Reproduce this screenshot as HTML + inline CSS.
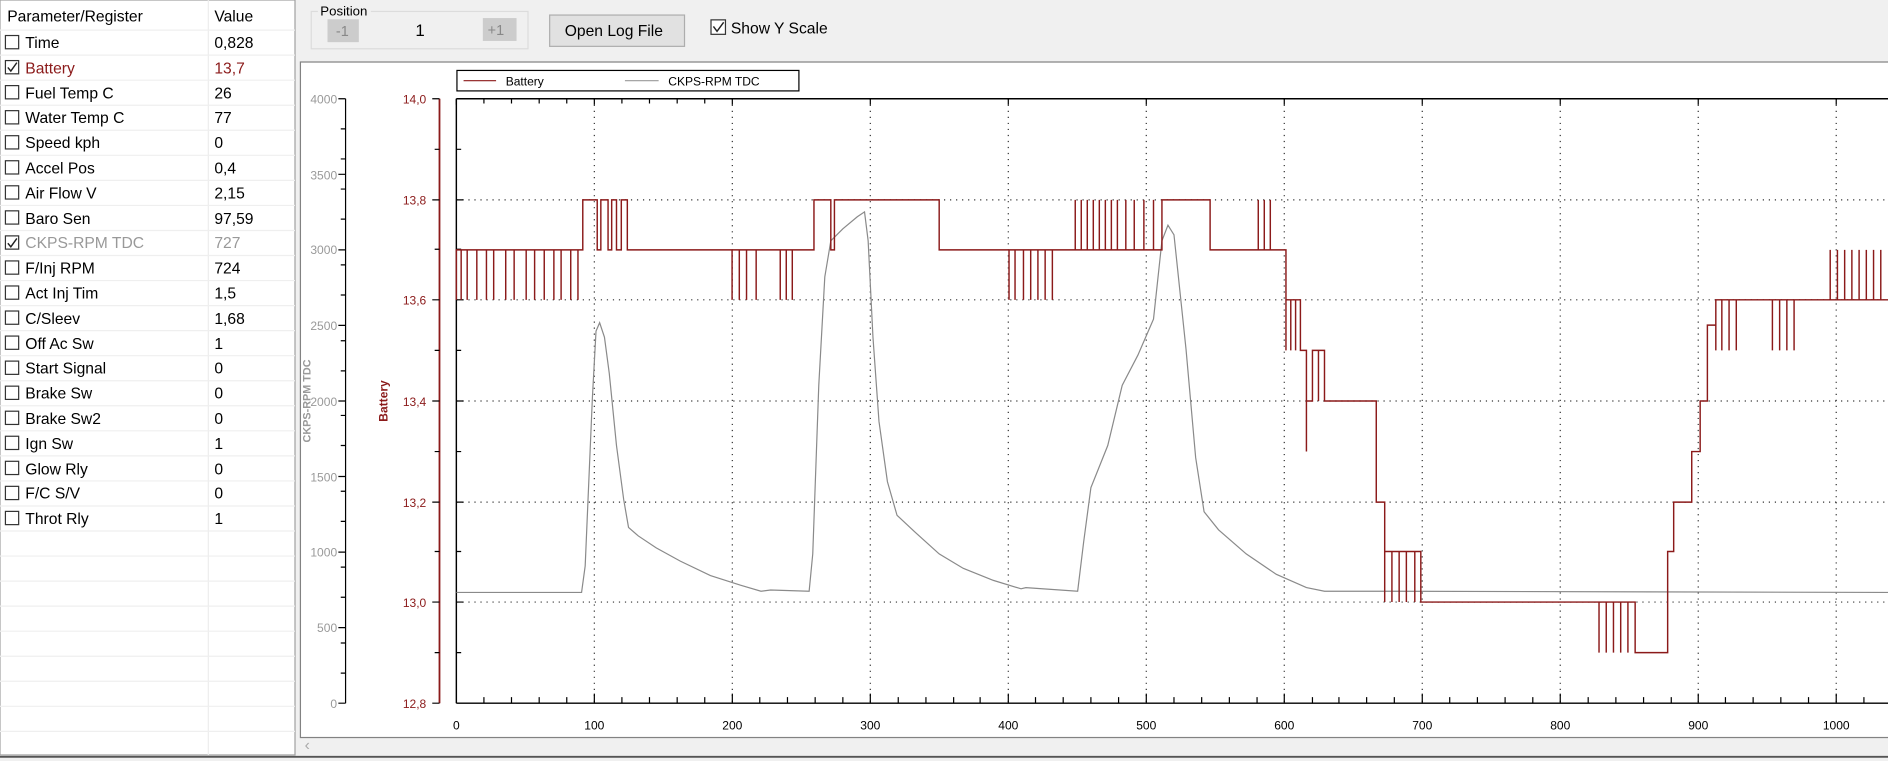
<!DOCTYPE html>
<html><head><meta charset="utf-8"><style>
html,body{margin:0;padding:0;background:#f0f0f0;overflow:hidden}
svg{display:block}
text{font-family:"Liberation Sans",sans-serif}
</style></head><body>
<svg width="1888" height="761" viewBox="0 0 1568 632" preserveAspectRatio="none" xmlns="http://www.w3.org/2000/svg">
<rect width="1568" height="632" fill="#f0f0f0"/>
<rect x="0" y="0" width="245" height="627" fill="#fff" stroke="#a0a0a0"/>
<line x1="173" y1="0" x2="173" y2="627" stroke="#ececec"/>
<g stroke="#efefef">
<line x1="0" y1="25" x2="245" y2="25"/>
<line x1="0" y1="45.8" x2="245" y2="45.8"/><line x1="0" y1="66.6" x2="245" y2="66.6"/><line x1="0" y1="87.4" x2="245" y2="87.4"/><line x1="0" y1="108.2" x2="245" y2="108.2"/><line x1="0" y1="129" x2="245" y2="129"/><line x1="0" y1="149.8" x2="245" y2="149.8"/><line x1="0" y1="170.6" x2="245" y2="170.6"/><line x1="0" y1="191.4" x2="245" y2="191.4"/><line x1="0" y1="212.2" x2="245" y2="212.2"/><line x1="0" y1="233" x2="245" y2="233"/><line x1="0" y1="253.8" x2="245" y2="253.8"/><line x1="0" y1="274.6" x2="245" y2="274.6"/><line x1="0" y1="295.4" x2="245" y2="295.4"/><line x1="0" y1="316.2" x2="245" y2="316.2"/><line x1="0" y1="337" x2="245" y2="337"/><line x1="0" y1="357.8" x2="245" y2="357.8"/><line x1="0" y1="378.6" x2="245" y2="378.6"/><line x1="0" y1="399.4" x2="245" y2="399.4"/><line x1="0" y1="420.2" x2="245" y2="420.2"/><line x1="0" y1="441" x2="245" y2="441"/><line x1="0" y1="461.8" x2="245" y2="461.8"/><line x1="0" y1="482.6" x2="245" y2="482.6"/><line x1="0" y1="503.4" x2="245" y2="503.4"/><line x1="0" y1="524.2" x2="245" y2="524.2"/><line x1="0" y1="545" x2="245" y2="545"/><line x1="0" y1="565.8" x2="245" y2="565.8"/><line x1="0" y1="586.6" x2="245" y2="586.6"/><line x1="0" y1="607.4" x2="245" y2="607.4"/>
</g>
<g font-size="13" fill="#000">
<text x="6" y="18">Parameter/Register</text><text x="178" y="18">Value</text>
</g>
<g fill="#fff" stroke="#333" stroke-width="1">
<rect x="4.5" y="29.5" width="11" height="11"/><rect x="4.5" y="50.3" width="11" height="11"/><rect x="4.5" y="71.1" width="11" height="11"/><rect x="4.5" y="91.9" width="11" height="11"/><rect x="4.5" y="112.7" width="11" height="11"/><rect x="4.5" y="133.5" width="11" height="11"/><rect x="4.5" y="154.3" width="11" height="11"/><rect x="4.5" y="175.1" width="11" height="11"/><rect x="4.5" y="195.9" width="11" height="11"/><rect x="4.5" y="216.7" width="11" height="11"/><rect x="4.5" y="237.5" width="11" height="11"/><rect x="4.5" y="258.3" width="11" height="11"/><rect x="4.5" y="279.1" width="11" height="11"/><rect x="4.5" y="299.9" width="11" height="11"/><rect x="4.5" y="320.7" width="11" height="11"/><rect x="4.5" y="341.5" width="11" height="11"/><rect x="4.5" y="362.3" width="11" height="11"/><rect x="4.5" y="383.1" width="11" height="11"/><rect x="4.5" y="403.9" width="11" height="11"/><rect x="4.5" y="424.7" width="11" height="11"/>
</g>
<g fill="none" stroke="#222" stroke-width="1.2">
<path d="M6.5 56 L9 59 L14 52"/><path d="M6.5 202 L9 205 L14 198"/>
</g>
<g font-size="13" fill="#000">
<text x="21" y="40">Time</text><text x="178" y="40">0,828</text>
<text x="21" y="61" fill="#8b1a1a">Battery</text><text x="178" y="61" fill="#8b1a1a">13,7</text>
<text x="21" y="82">Fuel Temp C</text><text x="178" y="82">26</text>
<text x="21" y="102">Water Temp C</text><text x="178" y="102">77</text>
<text x="21" y="123">Speed kph</text><text x="178" y="123">0</text>
<text x="21" y="144">Accel Pos</text><text x="178" y="144">0,4</text>
<text x="21" y="165">Air Flow V</text><text x="178" y="165">2,15</text>
<text x="21" y="186">Baro Sen</text><text x="178" y="186">97,59</text>
<text x="21" y="206" fill="#999">CKPS-RPM TDC</text><text x="178" y="206" fill="#999">727</text>
<text x="21" y="227">F/Inj RPM</text><text x="178" y="227">724</text>
<text x="21" y="248">Act Inj Tim</text><text x="178" y="248">1,5</text>
<text x="21" y="269">C/Sleev</text><text x="178" y="269">1,68</text>
<text x="21" y="290">Off Ac Sw</text><text x="178" y="290">1</text>
<text x="21" y="310">Start Signal</text><text x="178" y="310">0</text>
<text x="21" y="331">Brake Sw</text><text x="178" y="331">0</text>
<text x="21" y="352">Brake Sw2</text><text x="178" y="352">0</text>
<text x="21" y="373">Ign Sw</text><text x="178" y="373">1</text>
<text x="21" y="394">Glow Rly</text><text x="178" y="394">0</text>
<text x="21" y="414">F/C S/V</text><text x="178" y="414">0</text>
<text x="21" y="435">Throt Rly</text><text x="178" y="435">1</text>
</g>
<rect x="258.5" y="9.5" width="180" height="31" fill="none" stroke="#dcdcdc"/>
<rect x="264" y="3" width="44" height="12" fill="#f0f0f0"/>
<text x="266" y="13" font-size="11">Position</text>
<rect x="272" y="16" width="26" height="19" fill="#cccccc"/><text x="279" y="30" font-size="12" fill="#888">-1</text>
<text x="345" y="30" font-size="14">1</text>
<rect x="401" y="15" width="28" height="19" fill="#cccccc"/><text x="405" y="29" font-size="12" fill="#888">+1</text>
<rect x="456.5" y="12.5" width="112" height="26" fill="#e1e1e1" stroke="#adadad"/>
<text x="469" y="30" font-size="13">Open Log File</text>
<rect x="590.5" y="16.5" width="12" height="12" fill="#fff" stroke="#333"/>
<path d="M592.5 22 L595.5 26 L601 18.5" fill="none" stroke="#222" stroke-width="1.2"/>
<text x="607" y="28" font-size="13">Show Y Scale</text>
<rect x="249.5" y="51.5" width="1320" height="561" fill="#fff" stroke="#828282"/>
<text x="253" y="623" font-size="13" fill="#aaa">‹</text>
<line x1="0" y1="628.5" x2="1568" y2="628.5" stroke="#555" stroke-width="1.5"/>
<rect x="379.5" y="58.5" width="284" height="17" fill="#fff" stroke="#000"/>
<line x1="385" y1="67" x2="412" y2="67" stroke="#8b1a1a"/><text x="420" y="71" font-size="10">Battery</text>
<line x1="519" y1="67" x2="547" y2="67" stroke="#999"/><text x="555" y="71" font-size="10">CKPS-RPM TDC</text>
<g stroke="#333" stroke-dasharray="1,4" stroke-width="1">
<line x1="493.6" y1="82" x2="493.6" y2="584"/><line x1="608.2" y1="82" x2="608.2" y2="584"/><line x1="722.8" y1="82" x2="722.8" y2="584"/><line x1="837.4" y1="82" x2="837.4" y2="584"/><line x1="952" y1="82" x2="952" y2="584"/><line x1="1066.6" y1="82" x2="1066.6" y2="584"/><line x1="1181.2" y1="82" x2="1181.2" y2="584"/><line x1="1295.8" y1="82" x2="1295.8" y2="584"/><line x1="1410.4" y1="82" x2="1410.4" y2="584"/><line x1="1525" y1="82" x2="1525" y2="584"/>
<line x1="379" y1="166" x2="1568" y2="166"/><line x1="379" y1="249" x2="1568" y2="249"/><line x1="379" y1="333" x2="1568" y2="333"/><line x1="379" y1="417" x2="1568" y2="417"/><line x1="379" y1="500" x2="1568" y2="500"/>
</g>
<g stroke="#000" stroke-width="1.2">
<line x1="379" y1="82" x2="379" y2="584"/><line x1="379" y1="584" x2="1568" y2="584"/>
<line x1="379" y1="82" x2="1568" y2="82"/>
</g>
<g stroke="#000">
<path d="M379 124h4M379 166h6M379 207h4M379 249h6M379 291h4M379 333h6M379 375h4M379 417h6M379 458h4M379 500h6M379 542h4"/>
<path d="M401.9 584v-5M424.8 584v-5M447.8 584v-5M470.7 584v-5M493.6 584v-8M516.5 584v-5M539.4 584v-5M562.4 584v-5M585.3 584v-5M608.2 584v-8M631 584v-5M654 584v-5M677 584v-5M700 584v-5M722.8 584v-8M746 584v-5M769 584v-5M792 584v-5M814 584v-5M837.4 584v-8M860 584v-5M883 584v-5M906 584v-5M929 584v-5M952 584v-8M975 584v-5M998 584v-5M1021 584v-5M1044 584v-5M1066.6 584v-8M1090 584v-5M1112 584v-5M1135 584v-5M1158 584v-5M1181.2 584v-8M1204 584v-5M1227 584v-5M1250 584v-5M1273 584v-5M1295.8 584v-8M1319 584v-5M1342 584v-5M1365 584v-5M1388 584v-5M1410.4 584v-8M1433 584v-5M1456 584v-5M1479 584v-5M1502 584v-5M1525 584v-8M1548 584v-5"/>
<path d="M379 82v5M401.9 82v4M424.8 82v4M447.8 82v4M470.7 82v4M493.6 82v5M516.5 82v4M539.4 82v4M562.4 82v4M585.3 82v4M608.2 82v5M722.8 82v5M837.4 82v5M952 82v5M1066.6 82v5M1181.2 82v5M1295.8 82v5M1410.4 82v5M1525 82v5"/>
</g>
<g font-size="10" text-anchor="middle">
<text x="379" y="606">0</text><text x="493.6" y="606">100</text><text x="608.2" y="606">200</text><text x="722.8" y="606">300</text><text x="837.4" y="606">400</text><text x="952" y="606">500</text><text x="1066.6" y="606">600</text><text x="1181.2" y="606">700</text><text x="1295.8" y="606">800</text><text x="1410.4" y="606">900</text><text x="1525" y="606">1000</text>
</g>
<line x1="365" y1="82" x2="365" y2="584" stroke="#8b1a1a" stroke-width="1.5"/>
<path d="M359 82h6M359 166h6M359 249h6M359 333h6M359 417h6M359 500h6M359 584h6M361 124h4M361 207h4M361 291h4M361 375h4M361 458h4M361 542h4" stroke="#000"/>
<g font-size="10" fill="#8b1a1a" text-anchor="end">
<text x="354" y="86">14,0</text><text x="354" y="170">13,8</text><text x="354" y="253">13,6</text><text x="354" y="337">13,4</text><text x="354" y="421">13,2</text><text x="354" y="504">13,0</text><text x="354" y="588">12,8</text>
</g>
<text transform="translate(322,333) rotate(-90)" font-size="10" font-weight="bold" fill="#8b1a1a" text-anchor="middle">Battery</text>
<line x1="287" y1="82" x2="287" y2="584" stroke="#000"/>
<path d="M281 82h6M281 144.75h6M281 207.5h6M281 270.25h6M281 333h6M281 395.75h6M281 458.5h6M281 521.25h6M281 584h6M283 107h4M283 132h4M283 157h4M283 182h4M283 220h4M283 245h4M283 283h4M283 308h4M283 345h4M283 370h4M283 408h4M283 433h4M283 471h4M283 496h4M283 534h4M283 559h4" stroke="#000"/>
<g font-size="10" fill="#999" text-anchor="end">
<text x="280" y="86">4000</text><text x="280" y="149">3500</text><text x="280" y="211">3000</text><text x="280" y="274">2500</text><text x="280" y="337">2000</text><text x="280" y="400">1500</text><text x="280" y="462">1000</text><text x="280" y="525">500</text><text x="280" y="588">0</text>
</g>
<text transform="translate(258,333) rotate(-90)" font-size="9" font-weight="bold" fill="#999" text-anchor="middle">CKPS-RPM TDC</text>
<path fill="none" stroke="#8a8a8a" stroke-width="1" d="M379 492 L483 492 L486 470 L489 400 L492 330 L495 275 L498 268 L502 280 L506 310 L512 370 L518 415 L522 438 L530 445 L545 455 L565 466 L590 478 L615 486 L632 491 L640 490 L672 491 L675 460 L680 320 L685 230 L690 200 L700 190 L712 180 L718 176 L721 200 L725 280 L730 350 L737 400 L745 428 L760 442 L780 460 L800 472 L825 482 L848 489 L852 488 L895 491 L900 450 L906 405 L912 390 L920 370 L932 320 L945 295 L958 265 L965 200 L970 187 L975 195 L985 290 L993 380 L1000 425 L1012 440 L1035 460 L1060 477 L1085 488 L1100 491 L1140 491 L1568 492"/>
<path fill="none" stroke="#8b1a1a" stroke-width="1.2" d="M379 249 V207.5 H383 V249 V207.5 H388 V249 V207.5 H396 V249 V207.5 H404 V249 V207.5 H410 V249 V207.5 H420 V249 V207.5 H427 V249 V207.5 H437 V249 V207.5 H444 V249 V207.5 H452 V249 V207.5 H460 V249 V207.5 H466 V249 V207.5 H474 V249 V207.5 H480 V249 V207.5 H484 V166 H496 V207.5 H499 V166 H505 V207.5 H508 V166 H512 V207.5 H516 V166 H521 V207.5 H608 V249 V207.5 H614 V249 V207.5 H620 V249 V207.5 H628 V249 V207.5 H636 V207.5 H648 V249 V207.5 H653 V249 V207.5 H658 V249 V207.5 H664 V207.5 H672 V207.5 H676 V166 H690 V207.5 H693 V166 H780 V207.5 H838 V249 V207.5 H843 V249 V207.5 H850 V249 V207.5 H856 V249 V207.5 H862 V249 V207.5 H868 V249 V207.5 H874 V249 V207.5 H893 V166 V207.5 H898 V166 V207.5 H903 V166 V207.5 H908 V166 V207.5 H913 V166 V207.5 H918 V166 V207.5 H923 V166 V207.5 H928 V166 V207.5 H935 V166 V207.5 H942 V166 V207.5 H950 V166 V207.5 H958 V166 V207.5 H965 V166 H1005 V207.5 H1045 V166 V207.5 H1050 V166 V207.5 H1055 V166 V207.5 H1068 V291 V249 H1072 V291 V249 H1076 V291 V249 H1080 V291 H1085 V375 V333 H1090 V333 V291 H1095 V333 V291 H1100 V333 H1143 V417 H1150 V500 V458 H1156 V500 V458 H1162 V500 V458 H1168 V500 V458 H1175 V500 V458 H1180 V500 H1328 V542 V500 H1334 V542 V500 H1340 V542 V500 H1346 V542 V500 H1352 V542 V500 H1358 V542 H1385 V458 H1390 V417 H1405 V375 H1412 V333 H1418 V291 V270 H1425 V291 V249 H1430 V291 V249 H1436 V291 V249 H1442 V291 V249 H1448 V249 H1472 V291 V249 H1478 V291 V249 H1484 V291 V249 H1490 V291 V249 H1496 V249 H1520 V207.5 V249 H1526 V207.5 V249 H1532 V207.5 V249 H1538 V207.5 V249 H1544 V207.5 V249 H1550 V207.5 V249 H1556 V207.5 V249 H1562 V207.5 V249 H1568"/>
</svg>
</body></html>
